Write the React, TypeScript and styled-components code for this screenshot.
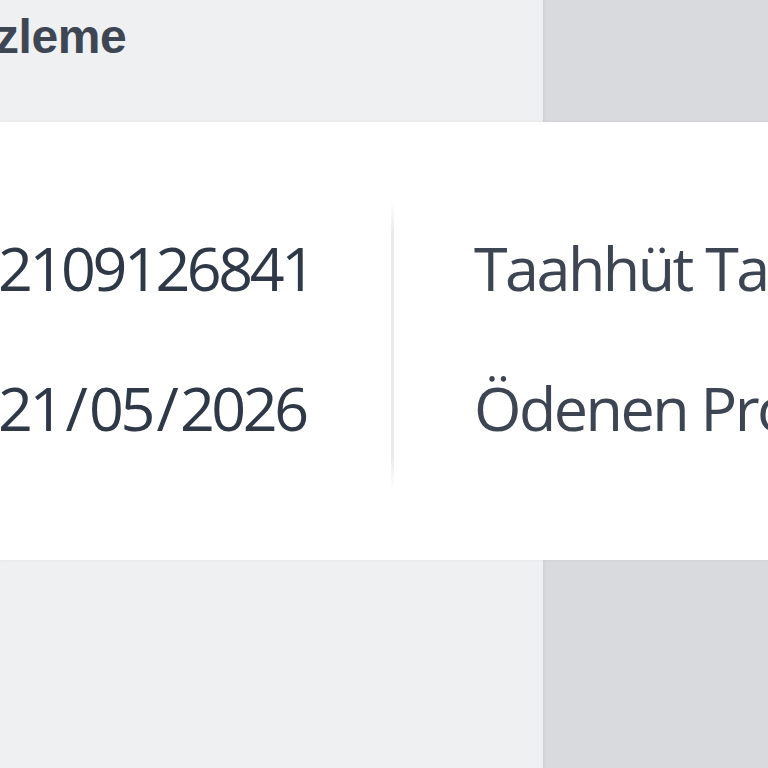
import React from "react";
import styled, { createGlobalStyle } from "styled-components";

const Global = createGlobalStyle`
  html, body { margin: 0; padding: 0; background: #eff0f2; overflow: hidden; }
  #root { width: 768px; height: 768px; }
`;

const Page = styled.div`
  width: 768px;
  height: 768px;
  display: flex;
  flex-direction: column;
  overflow: hidden;
`;

const Band = styled.div<{ $h: number }>`
  display: grid;
  grid-template-columns: 543px 1fr;
  height: ${(p) => p.$h}px;
  flex: none;
`;

const BandMain = styled.div`
  background: #eff0f2;
  overflow: hidden;
`;

const BandSide = styled.div`
  background: #d9dadd;
  box-shadow: inset 3px 0 3px -2px rgba(0, 0, 0, 0.06);
`;

const Heading = styled.h1`
  margin: 0;
  padding-top: 11px;
  margin-left: -5px;
  font-family: "Liberation Sans", Arial, sans-serif;
  font-weight: 700;
  font-size: 48px;
  line-height: 52px;
  letter-spacing: -0.4px;
  color: #3f4653;
  white-space: nowrap;
`;

const Card = styled.section`
  flex: none;
  height: 438px;
  box-sizing: border-box;
  background: #ffffff;
  padding-top: 78px;
  display: flex;
  box-shadow: 0 0 4px rgba(0, 0, 0, 0.05);
  position: relative;
  z-index: 1;
  overflow: hidden;
`;

const Column = styled.div<{ $w?: number; $pl?: number }>`
  box-sizing: border-box;
  ${(p) => (p.$w ? `width: ${p.$w}px; flex: none;` : "flex: 1; min-width: 0;")}
  padding: 33px 0 47px ${(p) => p.$pl ?? 0}px;
  display: flex;
  flex-direction: column;
  gap: 70px;
  white-space: nowrap;
`;

const Divider = styled.div`
  flex: none;
  width: 3px;
  height: 290px;
  background: linear-gradient(
    to bottom,
    rgba(233, 234, 236, 0) 0%,
    #e9eaec 12%,
    #e9eaec 88%,
    rgba(233, 234, 236, 0) 100%
  );
`;

const Value = styled.div`
  font-family: "Open Sans", Lato, sans-serif;
  font-size: 61px;
  line-height: 70px;
  height: 70px;
  letter-spacing: -3.4px;
  color: #2f3847;
  margin-left: -2px;
`;

const Slash = styled.span`
  padding: 0 4.5px;
`;

const Label = styled.div`
  font-family: "Open Sans", Lato, sans-serif;
  font-size: 61px;
  line-height: 70px;
  height: 70px;
  letter-spacing: -2.5px;
  color: #3d4452;
`;

export default function App() {
  return (
    <Page>
      <Global />
      <Band $h={122}>
        <BandMain>
          <Heading>zleme</Heading>
        </BandMain>
        <BandSide />
      </Band>
      <Card>
        <Column $w={391}>
          <Value>2109126841</Value>
          <Value>
            21<Slash>/</Slash>05<Slash>/</Slash>2026
          </Value>
        </Column>
        <Divider />
        <Column $pl={80}>
          <Label>Taahhüt Tarihi</Label>
          <Label>Ödenen Promosyon</Label>
        </Column>
      </Card>
      <Band $h={208}>
        <BandMain />
        <BandSide />
      </Band>
    </Page>
  );
}
